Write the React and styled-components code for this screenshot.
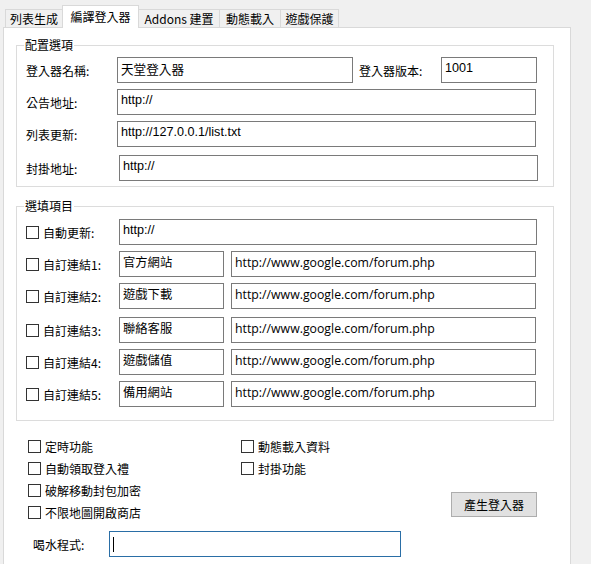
import React from 'react';
import styled, { createGlobalStyle } from 'styled-components';

const Global = createGlobalStyle`
  html, body {
    margin: 0;
    padding: 0;
    background: #f0f0f0;
  }
  body {
    font-family: "Noto Sans CJK TC", sans-serif;
    font-size: 12px;
    color: #000;
  }
`;

const Window = styled.div`
  width: 591px;
  height: 564px;
  overflow: hidden;
`;

const TabStrip = styled.div`
  display: flex;
  align-items: flex-end;
  height: 22px;
  padding: 5px 0 0 5px;
`;

const Tab = styled.div`
  box-sizing: border-box;
  position: relative;
  z-index: ${({ $active }) => ($active ? 2 : 1)};
  width: ${({ $w }) => $w}px;
  height: ${({ $active }) => ($active ? 23 : 18)}px;
  margin-left: -1px;
  margin-bottom: ${({ $active }) => ($active ? -1 : 0)}px;
  border: 1px solid #d9d9d9;
  border-bottom: none;
  background: ${({ $active }) => ($active ? '#fff' : '#f0f0f0')};
  display: flex;
  align-items: center;
  justify-content: center;
  line-height: 1;
  white-space: nowrap;
  &:first-child {
    margin-left: 0;
  }
`;

const Panel = styled.div`
  box-sizing: border-box;
  width: 568px;
  height: 600px;
  margin-left: 3px;
  padding: 10px 16px 0 12px;
  border: 1px solid #d9d9d9;
  background: #fff;
`;

const GroupBox = styled.fieldset`
  margin: ${({ $mt }) => $mt || 0}px 0 0 0;
  padding: ${({ $pt }) => $pt}px 16px ${({ $pb }) => $pb}px 9px;
  border: 1px solid #dcdcdc;
  min-width: 0;
`;

const Legend = styled.legend`
  padding: 0 1px;
  margin-left: -2px;
  line-height: 14px;
  font-size: 12px;
`;

const Row = styled.div`
  display: flex;
  align-items: center;
  height: 26px;
  margin-top: ${({ $mt }) => $mt || 0}px;
`;

const Label = styled.span`
  flex: none;
  width: ${({ $w }) => $w}px;
  margin-left: ${({ $ml }) => $ml || 0}px;
  white-space: nowrap;
`;

const Field = styled.input`
  flex: none;
  box-sizing: border-box;
  width: ${({ $w }) => $w}px;
  height: 26px;
  margin: 0 0 0 ${({ $ml }) => $ml || 0}px;
  padding: 0 3px 4px;
  border: 1px solid #7a7a7a;
  border-radius: 0;
  outline: none;
  background: #fff;
  color: #000;
  font-family: "Liberation Sans", "Noto Sans CJK TC", sans-serif;
  font-size: 12.6px;
  ${({ $smooth }) =>
    $smooth &&
    `
    font-family: "Open Sans", "Noto Sans CJK TC", sans-serif;
    font-size: 12.3px;
  `}
`;

const Check = styled.label`
  flex: none;
  display: flex;
  align-items: center;
  gap: 4px;
  width: ${({ $w }) => ($w ? `${$w}px` : 'auto')};
  white-space: nowrap;
`;

const Box = styled.span`
  flex: none;
  box-sizing: border-box;
  width: 13px;
  height: 13px;
  border: 1px solid #333;
  background: #fff;
`;

const Options = styled.div`
  display: grid;
  grid-template-columns: 213px 210px 86px;
  grid-template-rows: repeat(4, 22px);
  margin: 14px 0 0 12px;
`;

const Button = styled.button`
  grid-column: 3;
  grid-row: 3 / span 2;
  align-self: end;
  box-sizing: border-box;
  height: 25px;
  margin: 0 0 6px;
  padding: 0;
  border: 1px solid #adadad;
  border-radius: 0;
  background: #e1e1e1;
  color: #000;
  font-family: "Noto Sans CJK TC", sans-serif;
  font-size: 12px;
`;

const WaterRow = styled.div`
  display: flex;
  align-items: center;
  height: 26px;
  margin-top: 8px;
`;

const FocusBox = styled.div`
  box-sizing: border-box;
  display: flex;
  align-items: center;
  width: 292px;
  height: 26px;
  padding-left: 3px;
  border: 1px solid #2a6ea6;
  background: #fff;
`;

const Caret = styled.span`
  width: 1px;
  height: 15px;
  background: #000;
`;

const tabs = [
  { name: '列表生成', w: 58 },
  { name: '編譯登入器', w: 77, active: true },
  { name: 'Addons 建置', w: 82 },
  { name: '動態載入', w: 62 },
  { name: '遊戲保護', w: 59 },
];

const links = [
  ['自訂連結1:', '官方網站', 6],
  ['自訂連結2:', '遊戲下載', 6],
  ['自訂連結3:', '聯絡客服', 8],
  ['自訂連結4:', '遊戲儲值', 6],
  ['自訂連結5:', '備用網站', 6],
];

const App = () => {
  return (
    <Window>
      <Global />
      <TabStrip>
        {tabs.map((t) => (
          <Tab key={t.name} $w={t.w} $active={t.active}>
            {t.name}
          </Tab>
        ))}
      </TabStrip>
      <Panel>
        <GroupBox $pt={5} $pb={5}>
          <Legend>配置選項</Legend>
          <Row>
            <Label $w={91}>登入器名稱:</Label>
            <Field readOnly $w={236} value="天堂登入器" />
            <Label $w={82} $ml={6}>登入器版本:</Label>
            <Field readOnly $w={96} value="1001" />
          </Row>
          <Row $mt={6}>
            <Label $w={91}>公告地址:</Label>
            <Field readOnly $w={419} value="http://" />
          </Row>
          <Row $mt={6}>
            <Label $w={91}>列表更新:</Label>
            <Field readOnly $w={419} value="http://127.0.0.1/list.txt" />
          </Row>
          <Row $mt={8}>
            <Label $w={93}>封掛地址:</Label>
            <Field readOnly $w={419} value="http://" />
          </Row>
        </GroupBox>

        <GroupBox $mt={12} $pt={6} $pb={13}>
          <Legend>選填項目</Legend>
          <Row>
            <Check $w={93}>
              <Box />
              自動更新:
            </Check>
            <Field readOnly $w={418} value="http://" />
          </Row>
          {links.map(([label, site, mt]) => (
            <Row key={label} $mt={mt}>
              <Check $w={93}>
                <Box />
                {label}
              </Check>
              <Field readOnly $smooth $w={105} value={site} />
              <Field readOnly $smooth $w={305} $ml={7} value="http://www.google.com/forum.php" />
            </Row>
          ))}
        </GroupBox>

        <Options>
          <Check>
            <Box />
            定時功能
          </Check>
          <Check>
            <Box />
            動態載入資料
          </Check>
          <span />
          <Check>
            <Box />
            自動領取登入禮
          </Check>
          <Check>
            <Box />
            封掛功能
          </Check>
          <span />
          <Check>
            <Box />
            破解移動封包加密
          </Check>
          <span />
          <Button>產生登入器</Button>
          <Check>
            <Box />
            不限地圖開啟商店
          </Check>
        </Options>

        <WaterRow>
          <Label $w={76} $ml={17}>喝水程式:</Label>
          <FocusBox>
            <Caret />
          </FocusBox>
        </WaterRow>
      </Panel>
    </Window>
  );
};

export default App;
